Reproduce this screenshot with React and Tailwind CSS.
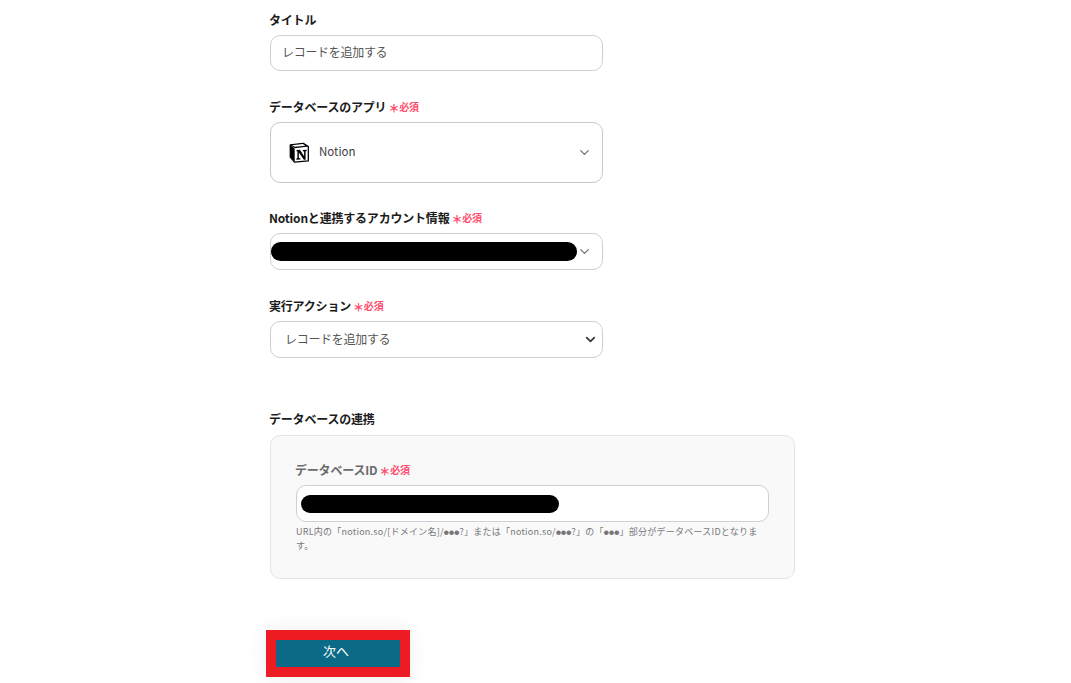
import { ChevronDown } from 'lucide-react'

function Required() {
  return (
    <span className="ml-[2px] flex items-center text-[#ff4d6d]">
      <span className="mt-[2px] text-[11px] font-black leading-none">＊</span>
      <span className="text-[10px] font-bold leading-none">必須</span>
    </span>
  )
}

function Label({ children, required, gray }) {
  return (
    <div className={`flex h-[18px] items-center text-[12px] font-bold tracking-[-0.2px] ${gray ? 'text-[#6b6b6b]' : 'text-[#1c1c1c]'}`}>
      <span className="ml-[-1px]">{children}</span>
      {required && <Required />}
    </div>
  )
}

function Dots() {
  return <span className="text-[5px] align-[1px]">●●●</span>
}

function NotionLogo() {
  return (
    <svg width="21" height="21" viewBox="0 0 100 100" className="shrink-0">
      <path d="M6 14 L68 6 L92 22 L92 90 L26 96 L6 72 Z" fill="#fff" stroke="#000" strokeWidth="6" strokeLinejoin="round" />
      <path d="M6 14 L27 32 L27 94 L6 72 Z" fill="#000" />
      <path d="M6 14 L68 6 L92 22 L27 30 Z" fill="#000" />
      <path d="M14 15 L66 10 L78 18 L28 23 Z" fill="#fff" />
      <path d="M36 38 L52 37 L72 68 L72 45 L66 44 L66 38 L84 37 L84 43 L79 44 L79 84 L71 85 L47 50 L47 76 L54 77 L54 83 L35 84 L35 78 L40 77 L40 45 L36 44 Z" fill="#000" />
    </svg>
  )
}

export default function App() {
  return (
    <div className="h-[683px] w-[1071px] overflow-hidden bg-white pl-[270px] pt-[11px] font-['Noto_Sans_CJK_JP',sans-serif]">
      <Label>タイトル</Label>
      <div className="mt-[6px] flex h-[36px] w-[333px] items-center rounded-[10px] border border-[#ccd0d8] pb-[2px] pl-[11px] text-[12px] tracking-[-0.3px] text-[#555]">
        レコードを追加する
      </div>

      <div className="mt-[27px]">
        <Label required>データベースのアプリ</Label>
      </div>
      <div className="mt-[6px] flex h-[61px] w-[333px] items-center rounded-[10px] border border-[#c8c8c8] pl-[18px] pr-[10px]">
        <NotionLogo />
        <span className="mb-[1px] ml-[9px] text-[11.5px] text-[#3c3c3c]">Notion</span>
        <ChevronDown size={15} strokeWidth={2} className="ml-auto text-[#707070]" />
      </div>

      <div className="mt-[26px]">
        <Label required>Notionと連携するアカウント情報</Label>
      </div>
      <div className="mt-[6px] flex h-[37px] w-[333px] items-center rounded-[10px] border border-[#ccd0d8] pr-[10px]">
        <div className="h-[19px] w-[306px] rounded-full bg-black" />
        <ChevronDown size={15} strokeWidth={2} className="ml-auto text-[#707070]" />
      </div>

      <div className="mt-[27px]">
        <Label required>実行アクション</Label>
      </div>
      <div className="mt-[6px] flex h-[37px] w-[333px] items-center rounded-[10px] border border-[#ccd0d8] pl-[14px] pr-[4px] text-[12px] tracking-[-0.3px] text-[#555]">
        <span className="mb-[2px]">レコードを追加する</span>
        <ChevronDown size={15} strokeWidth={3} className="ml-auto text-[#3c3c3c]" />
      </div>

      <div className="mt-[52px]">
        <Label>データベースの連携</Label>
      </div>
      <div className="mt-[7px] h-[144px] w-[525px] rounded-[10px] border border-[#e2e4e8] bg-[#f9f9fa] pl-[25px] pt-[25px]">
        <Label required gray>データベースID</Label>
        <div className="mt-[6px] flex h-[37px] w-[473px] items-center rounded-[10px] border border-[#ccd0d8] bg-white pl-[4px]">
          <div className="h-[18px] w-[258px] rounded-full bg-black" />
        </div>
        <p className="mt-[3px] w-[473px] text-[9px] leading-[14px] tracking-[0.24px] text-[#777]">
          URL内の「notion.so/[ドメイン名]/<Dots />?」または「notion.so/<Dots />?」の「<Dots />」部分がデータベースIDとなります。
        </p>
      </div>

      <div className="ml-[-4px] mt-[51px] w-[144px] border-[10px] border-[#ed1c24] shadow-[0_0_20px_rgba(0,0,0,0.08)]">
        <button className="flex h-[27px] w-full items-center justify-center bg-[#0b6a85] pb-[5px] pr-[4px] text-[13px] text-white">
          次へ
        </button>
      </div>
    </div>
  )
}
